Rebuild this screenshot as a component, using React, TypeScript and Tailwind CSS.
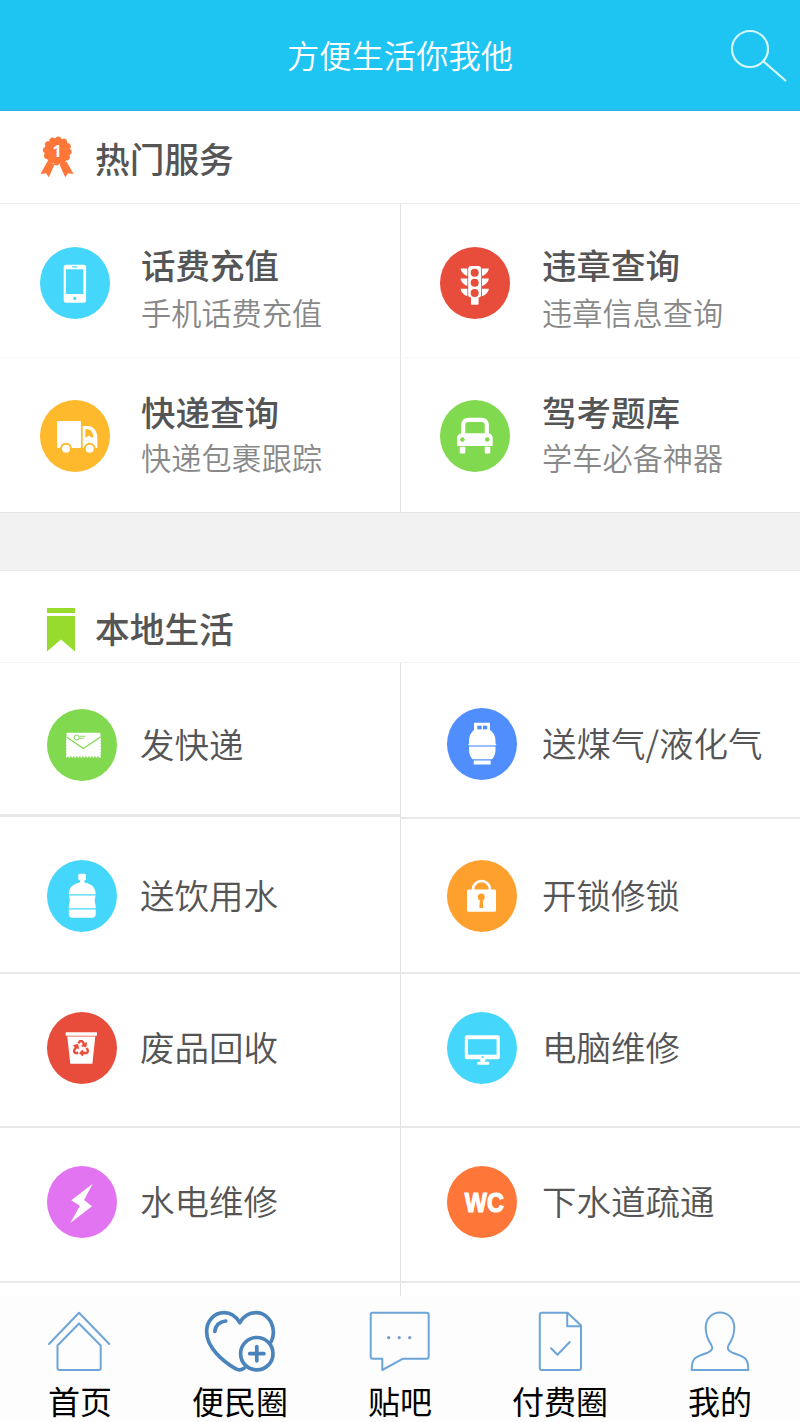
import type { ReactNode } from "react";
import { FaRecycle } from "react-icons/fa";

interface BadgeProps {
  color: string;
  children: ReactNode;
}

// Round coloured badge, glyphs are drawn in a 70x72 box
function Badge({ color, children }: BadgeProps) {
  return (
    <svg viewBox="0 0 70 72" className="h-[72px] w-[70px] shrink-0" fill="#fff">
      <ellipse cx="35" cy="36" rx="35" ry="36" fill={color} />
      {children}
    </svg>
  );
}

function PhoneBadge() {
  return (
    <Badge color="#45d7fb">
      <rect x="23.7" y="17.7" width="22.4" height="38" rx="2.5" />
      <rect x="26" y="22.3" width="17.4" height="24.7" fill="#45d7fb" />
      <rect x="32" y="19.2" width="5.4" height="1.2" rx="0.6" fill="#45d7fb" />
      <circle cx="34.8" cy="51.4" r="1.6" fill="#45d7fb" />
    </Badge>
  );
}

function TrafficBadge() {
  return (
    <Badge color="#e84c3a">
      <rect x="28.2" y="19" width="13" height="31.5" rx="3" />
      <rect x="31" y="49" width="7.6" height="8.8" rx="1" />
      {[25.7, 35.8, 46].map((y) => (
        <g key={y}>
          <circle cx="34.7" cy={y} r="4" fill="#e84c3a" />
          <path d={`M27.4 ${y - 4.2}h-6.8c.4 3.6 3.2 6.2 6.800 7.400z`} />
          <path d={`M42 ${y - 4.2}h6.8c-.4 3.6-3.2 6.2-6.800 7.400z`} />
        </g>
      ))}
    </Badge>
  );
}

function TruckBadge() {
  return (
    <Badge color="#feb92d">
      <rect x="17" y="21" width="24" height="27" rx="1" />
      <path d="M42.7 26H48c5.500 0 9.300 5 9.300 12v10H42.700z" />
      <path d="M45.300 29.200H48c3 0 5 3.200 5.400 8.300h-2.200c-1.600-2.200-3.400-1.800-4.400-.200h-1.500z" fill="#feb92d" />
      <circle cx="26" cy="48.7" r="5" stroke="#feb92d" strokeWidth="2" />
      <circle cx="49.7" cy="48.7" r="5" stroke="#feb92d" strokeWidth="2" />
    </Badge>
  );
}

function CarBadge() {
  return (
    <Badge color="#81d950">
      <path
        d="M23.2 35V25c0-3.2 2-5.2 5.2-5.2h13.2c3.2 0 5.2 2 5.2 5.2v10"
        fill="none"
        stroke="#fff"
        strokeWidth="4.2"
      />
      <path d="M22 33.3h26c3 0 4.7 2.4 4.7 5V46H17v-7.7c0-2.6 2-5 5-5z" />
      <rect x="19.7" y="46.8" width="5.6" height="6.8" rx="1" />
      <rect x="44.7" y="46.8" width="5.6" height="6.8" rx="1" />
      <circle cx="22.4" cy="39.5" r="2.3" fill="#81d950" />
      <circle cx="47.3" cy="39.5" r="2.3" fill="#81d950" />
    </Badge>
  );
}

function MailBadge() {
  return (
    <Badge color="#81d950">
      <rect x="19.5" y="23.7" width="34" height="23.6" rx="1" />
      <path
        d="M20 28v19.5h33V28"
        fill="none"
        stroke="#fff"
        strokeWidth="2"
        strokeDasharray="1.8 1.2"
      />
      <path d="M19.5 28l16.8 11.5L53.5 28" fill="none" stroke="#81d950" strokeWidth="1.3" />
      <circle cx="29.7" cy="28.5" r="2.5" stroke="#81d950" />
      <path
        d="M32.5 27.5c2-1 3.5.5 6-.5M32.5 29.5c1.5-.7 2.5.3 4.5-.3"
        fill="none"
        stroke="#81d950"
      />
    </Badge>
  );
}

function GasBadge() {
  return (
    <Badge color="#518efd">
      <path d="M27 14.7h16V22c3.5 2.5 5.5 6 5.500 11v9c0 4-1.5 7-3.5 9.300H25.500c-2-2.300-3.500-5.300-3.500-9.300v-9c0-5 2-8.500 5-11z" />
      <rect x="30.3" y="17.7" width="4.4" height="3.6" fill="#518efd" />
      <rect x="36" y="17.7" width="4.2" height="3.6" fill="#518efd" />
      <path d="M21.5 38h27.5" stroke="#518efd" strokeWidth="1.2" />
      <path d="M21.4 36.5h27.8" stroke="#fff" strokeWidth="1.2" />
      <rect x="26.7" y="52.5" width="17" height="3.9" rx=".5" />
    </Badge>
  );
}

function WaterBadge() {
  return (
    <Badge color="#45d7fb">
      <rect x="31.3" y="13.7" width="7.7" height="6.500" rx="1.5" />
      <path d="M33 19h4.400v3.500c7 1.200 11.300 5 11.300 11.500 0 3-1 4-1 6.500s1 3.500 1 6.500v7c0 2.500-1.200 3.700-3.700 3.700H25.500c-2.500 0-3.700-1.200-3.700-3.700v-7c0-3 1-4 1-6.500s-1-3.500-1-6.500c0-6.500 4.200-10.300 11.200-11.500z" />
      <path d="M21 34.8h28.5M21 48.8h28.5" stroke="#45d7fb" strokeWidth="1.3" />
    </Badge>
  );
}

function LockBadge() {
  return (
    <Badge color="#fea02d">
      <path d="M26 31v-1.5a8.5 8.5 0 0 1 17 0V31" fill="none" stroke="#fff" strokeWidth="2.6" />
      <rect x="20" y="29.5" width="29" height="22.3" rx="1.5" />
      <circle cx="34.3" cy="37" r="3.5" fill="#fea02d" />
      <path d="M33 38h2.7l.6 10h-3.9z" fill="#fea02d" />
    </Badge>
  );
}

function TrashBadge() {
  return (
    <Badge color="#e84c3a">
      <rect x="18.7" y="20.3" width="31.3" height="3.5" rx=".5" />
      <path d="M20.3 24.6h28l-2.9 27.200H23.300z" />
      <FaRecycle
        x="26"
        y="28"
        width="17"
        height="17"
        color="#e84c3a"
        stroke="#e84c3a"
        strokeWidth="18"
      />
    </Badge>
  );
}

function MonitorBadge() {
  return (
    <Badge color="#45d7fb">
      <path d="M32.5 46h6.500l-1.200 4.300h-4z" />
      <rect x="30.3" y="49.8" width="12" height="3" rx="1" />
      <rect x="17.8" y="23.2" width="35" height="24" rx="2" />
      <rect x="21" y="27.2" width="28.6" height="15.5" fill="#45d7fb" />
      <circle cx="35.6" cy="45" r="1.1" fill="#45d7fb" />
    </Badge>
  );
}

function BoltBadge() {
  return (
    <Badge color="#e374f1">
      <path d="M45.7 17.7L24.3 34.2l8.6 5.6-9.600 17.200L45 40.200l-7.900-6.300z" />
    </Badge>
  );
}

function WcBadge() {
  return (
    <Badge color="#ff7639">
      <text
        x="17.8"
        y="46"
        textLength="39"
        lengthAdjust="spacingAndGlyphs"
        stroke="#fff"
        strokeWidth="1.2"
        className="font-['Liberation_Sans',sans-serif] text-[27px] font-bold"
      >
        WC
      </text>
    </Badge>
  );
}

function MedalIcon() {
  return (
    <svg viewBox="0 0 34 42" className="h-[42px] w-[34px]" fill="#ff7639">
      <path d="M7.500 25.500L.5 38l5.500-.8 2.800 4 5.700-12.700zM26.500 25.500L33.500 38l-5.500-.8-2.800 4-5.700-12.700z" />
      <circle cx="17.3" cy="15" r="13" />
      <circle
        cx="17.3"
        cy="15"
        r="12.600"
        fill="none"
        stroke="#ff7639"
        strokeWidth="3.600"
        strokeLinecap="round"
        strokeDasharray="1.6 4.997"
      />
      <text
        x="17"
        y="20.500"
        textAnchor="middle"
        fill="#fff"
        className="font-['Open_Sans',sans-serif] text-[16px] font-bold"
      >
        1
      </text>
    </svg>
  );
}

function BookmarkIcon() {
  return (
    <svg viewBox="0 0 28 44" className="h-[44px] w-[28px]" fill="#97db2c">
      <path d="M0 0h28v5H0zM0 8h28v35.500L14 31.500 0 43.500z" />
    </svg>
  );
}

const hotServices = [
  { name: "话费充值", desc: "手机话费充值", icon: <PhoneBadge /> },
  { name: "违章查询", desc: "违章信息查询", icon: <TrafficBadge /> },
  { name: "快递查询", desc: "快递包裹跟踪", icon: <TruckBadge /> },
  { name: "驾考题库", desc: "学车必备神器", icon: <CarBadge /> },
];

const localRows = [
  {
    pad: "pt-2",
    left: { name: "发快递", icon: <MailBadge /> },
    right: { name: "送煤气/液化气", icon: <GasBadge /> },
  },
  {
    pad: "pt-0",
    left: { name: "送饮用水", icon: <WaterBadge /> },
    right: { name: "开锁修锁", icon: <LockBadge /> },
  },
  {
    pad: "pb-1",
    left: { name: "废品回收", icon: <TrashBadge /> },
    right: { name: "电脑维修", icon: <MonitorBadge /> },
  },
  {
    pad: "pb-[5px]",
    left: { name: "水电维修", icon: <BoltBadge /> },
    right: { name: "下水道疏通", icon: <WcBadge /> },
  },
];

const tabs = [
  {
    label: "首页",
    icon: (
      <>
        <path d="M9 35L39 3.700 69.300 35" />
        <path d="M17.5 36.500L39 14.500l21.700 22V59q0 2-2 2H19.500q-2 0-2-2z" />
      </>
    ),
  },
  {
    label: "便民圈",
    icon: (
      <g stroke="#4b84bb" strokeWidth="3.7">
        <path d="M71 33c2-4 2.700-7 2.300-11C72.500 11 65 3.700 56 3.700c-7 0-12.500 3.500-16.300 10C36 7.200 30.500 3.700 24 3.700 14 3.700 6.600 12 6.600 22.500c0 16 16 29.500 28.900 37.200 3.200 1.900 5.200 1.900 8.500-.4" />
        <circle cx="56.8" cy="44.700" r="16.200" />
        <path d="M49.7 44.700h14.200M56.800 37.600v14.200" />
        <path d="M14.8 22.500c.7-6 4.700-9.800 11-10.500" />
      </g>
    ),
  },
  {
    label: "贴吧",
    icon: (
      <>
        <path d="M12.7 3.700h54q2 0 2 2v42q0 2-2 2H43L22.300 61V49.700h-9.600q-2 0-2-2v-42q0-2 2-2z" />
        <g fill="#7b9cc4" stroke="none">
          <circle cx="28.7" cy="28.700" r="1.600" />
          <circle cx="39.2" cy="28.700" r="1.600" />
          <circle cx="49.7" cy="28.700" r="1.600" />
        </g>
      </>
    ),
  },
  {
    label: "付费圈",
    icon: (
      <>
        <path d="M21.8 3.700h25.700L61 16.500V59q0 2-2 2H21.800q-2 0-2-2V5.700q0-2 2-2z" />
        <path d="M47.2 4v13.300H61M31 39.300l6.500 6.400L49.700 33" />
      </>
    ),
  },
  {
    label: "我的",
    icon: (
      <path d="M40 3.500c-8.500 0-14.300 6.500-14.300 15.500 0 7 2.300 12 5.600 17 2.200 3.500.5 5.500-3 7.300-4.300 2-9 3-12.800 5.500-3.300 2.200-3.800 6-3.800 12.200h56.600c0-6.200-.5-10-3.800-12.200-3.800-2.500-8.500-3.500-12.800-5.500-3.500-1.800-5.200-3.800-3-7.300 3.300-5 5.600-10 5.600-17C54.300 10 48.500 3.500 40 3.500z" />
    ),
  },
];

export default function App() {
  return (
    <div className="flex h-[1422px] w-[800px] flex-col bg-white font-['Noto_Sans_CJK_SC',sans-serif] leading-none font-[350] text-[#555]">
      <header className="grid h-[111px] shrink-0 grid-cols-[100px_1fr_100px] items-center border-b-2 border-[#30b9e6] bg-[#1ec4f2] text-white">
        <h1 className="col-start-2 text-center text-[32.3px]">方便生活你我他</h1>
        <svg
          viewBox="0 0 60 56"
          className="mr-3 h-[56px] w-[60px] justify-self-end"
          fill="none"
          stroke="#d5f8ff"
          strokeWidth="2.2"
        >
          <circle cx="22" cy="22" r="18" />
          <path d="M34.5 33.500L58 54" />
        </svg>
      </header>

      <section className="shrink-0">
        <div className="flex h-[93px] items-center border-b border-[#ececec] pl-10">
          <MedalIcon />
          <h2 className="ml-[21px] pt-0.5 text-[34.7px] font-medium">热门服务</h2>
        </div>
        <div className="grid grid-cols-[401px_399px] grid-rows-[154px_154px] border-b border-[#e2e2e2]">
          {hotServices.map((item, i) => (
            <div
              key={item.name}
              className={`flex items-start ${i % 2 === 0 ? "border-r border-r-[#e2e2e2] pl-10" : "pl-[39px]"} ${
                i < 2 ? "border-b border-b-[#f8f8f8] pt-[43px]" : "pt-[42px]"
              }`}
            >
              {item.icon}
              <div className={i % 2 === 0 ? "ml-[31px]" : "ml-8"}>
                <h3 className={`text-[34.5px] font-medium ${i < 2 ? "" : "-mt-[6px]"}`}>{item.name}</h3>
                <p className={`text-[30.2px] text-[#888] ${i < 2 ? "mt-[15px]" : "mt-[13px]"}`}>
                  {item.desc}
                </p>
              </div>
            </div>
          ))}
        </div>
      </section>

      <div className="h-[58px] shrink-0 border-b border-[#e8e8e8] bg-[#f2f2f2]" />

      <section className="min-h-0 flex-1 overflow-hidden">
        <div className="flex h-[92px] items-center border-b border-[#f5f5f5] pt-[27px] pl-[47px]">
          <BookmarkIcon />
          <h2 className="ml-5 pb-[3px] text-[34.7px] font-medium">本地生活</h2>
        </div>
        <div className="grid grid-cols-[400px_400px] grid-rows-[156px_155px_154px_155px_20px]">
          {localRows.map((row, i) => [
            <div
              key={row.left.name}
              className={`flex items-center border-b-[#e8e8e8] pl-[47px] ${
                i === 0 ? "h-[154px] border-b-3 pt-[13px]" : `border-b-2 ${row.pad}`
              }`}
            >
              {row.left.icon}
              <span className="ml-[23px] pb-[3px] text-[34.5px]">{row.left.name}</span>
            </div>,
            <div
              key={row.right.name}
              className={`flex items-center border-b-2 border-l border-b-[#e8e8e8] border-l-[#e2e2e2] pl-[46px] ${row.pad}`}
            >
              {row.right.icon}
              <span className="ml-[25px] pb-[3px] text-[34.5px]">{row.right.name}</span>
            </div>,
          ])}
          <div className="col-start-2 border-l border-[#e2e2e2]" />
        </div>
      </section>

      <nav className="grid h-[126px] shrink-0 grid-cols-5 bg-[#fdfdfd] pt-[13px] font-normal text-black">
        {tabs.map((tab) => (
          <div key={tab.label} className="flex flex-col items-center">
            <svg
              viewBox="0 0 80 64"
              className="h-16 w-20"
              fill="none"
              stroke="#6ea5d8"
              strokeWidth="2"
              strokeLinecap="round"
              strokeLinejoin="round"
            >
              {tab.icon}
            </svg>
            <span className="mt-[7px] text-[32px] leading-[40px]">{tab.label}</span>
          </div>
        ))}
      </nav>
    </div>
  );
}
